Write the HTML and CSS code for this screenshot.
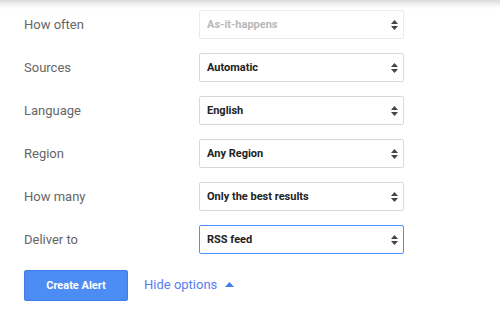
FILE: index.html
```html
<!DOCTYPE html>
<html>
<head>
<meta charset="utf-8">
<link rel="stylesheet" href="styles.css">
</head>
<body>
<div class="page">
  <div class="form">
    <div class="label">How often</div>
    <div class="select disabled"><span>As-it-happens</span><svg class="arrows" width="7" height="10" viewBox="0 0 7 10"><path d="M3.5 0L7 4H0z M0 6h7L3.5 10z"/></svg></div>
    <div class="label">Sources</div>
    <div class="select"><span>Automatic</span><svg class="arrows" width="7" height="10" viewBox="0 0 7 10"><path d="M3.5 0L7 4H0z M0 6h7L3.5 10z"/></svg></div>
    <div class="label">Language</div>
    <div class="select"><span>English</span><svg class="arrows" width="7" height="10" viewBox="0 0 7 10"><path d="M3.5 0L7 4H0z M0 6h7L3.5 10z"/></svg></div>
    <div class="label">Region</div>
    <div class="select"><span>Any Region</span><svg class="arrows" width="7" height="10" viewBox="0 0 7 10"><path d="M3.5 0L7 4H0z M0 6h7L3.5 10z"/></svg></div>
    <div class="label">How many</div>
    <div class="select"><span>Only the best results</span><svg class="arrows" width="7" height="10" viewBox="0 0 7 10"><path d="M3.5 0L7 4H0z M0 6h7L3.5 10z"/></svg></div>
    <div class="label">Deliver to</div>
    <div class="select focused"><span>RSS feed</span><svg class="arrows" width="7" height="10" viewBox="0 0 7 10"><path d="M3.5 0L7 4H0z M0 6h7L3.5 10z"/></svg></div>
  </div>
  <div class="actions">
    <button class="create">Create Alert</button>
    <a class="hide">Hide options <svg class="tri" width="9" height="5" viewBox="0 0 9 5"><path d="M4.5 0L9 5H0z"/></svg></a>
  </div>
</div>
</body>
</html>
```

FILE: styles.css
```css
html, body {
  margin: 0;
  padding: 0;
}
body {
  width: 500px;
  height: 313px;
  font-family: Roboto, "Liberation Sans", Arial, sans-serif;
  background: #fff linear-gradient(#dadada, #f4f4f4 5px, #fff 9px) no-repeat;
  background-size: 100% 10px;
  overflow: hidden;
}
.page {
  padding: 10px 0 0 24px;
}
.form {
  display: grid;
  grid-template-columns: 175px 205px;
  grid-auto-rows: 29px;
  row-gap: 14px;
  align-items: center;
}
.label {
  font-size: 13px;
  color: #666;
}
.select {
  box-sizing: border-box;
  height: 29px;
  border: 1px solid #d9d9d9;
  border-radius: 2px;
  display: flex;
  align-items: center;
  justify-content: space-between;
  padding: 0 5px 0 7px;
  font-size: 11px;
  font-weight: bold;
  color: #222;
}
.select .arrows {
  fill: #444;
}
.select.disabled {
  border-color: #ebebeb;
  color: #b8b8b8;
}
.select.focused {
  border-color: #4d90fe;
}
.actions {
  display: flex;
  align-items: center;
  margin-top: 16px;
}
.create {
  box-sizing: border-box;
  width: 104px;
  height: 31px;
  background: #4d8cf4;
  border: 1px solid #3b7ee8;
  border-radius: 2px;
  color: #fff;
  font-family: Roboto, "Liberation Sans", Arial, sans-serif;
  font-size: 11px;
  font-weight: bold;
  padding: 0;
}
.hide {
  margin-left: 16px;
  font-size: 13px;
  color: #5a7ef0;
  display: flex;
  align-items: center;
  margin-top: -2px;
}
.hide .tri {
  margin-left: 8px;
  fill: #3f7fe9;
}
```
